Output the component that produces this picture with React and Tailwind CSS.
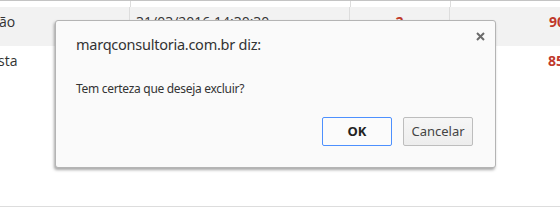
import React from "react";

const cell = "border-r border-[#dddddd] shrink-0";

export default function App() {
  return (
    <div className="relative w-[560px] h-[222px] overflow-hidden bg-white font-['Open_Sans',sans-serif] text-[14px] text-[#333]">
      {/* tabela de fundo */}
      <div className="h-px bg-[#c4c4c4]" />
      <div className="flex h-[6px]">
        <div className={`${cell} w-[131px]`} />
        <div className={`${cell} w-[220px]`} />
        <div className={`${cell} w-[100px]`} />
        <div className="flex-1" />
      </div>
      <div className="flex h-[39px] bg-[#f2f2f2]">
        <div className={`${cell} w-[131px] pt-[4px] -ml-px`}>ão</div>
        <div className={`${cell} w-[220px] pt-[4px] pl-[6px]`}>31/03/2016 14:30:30</div>
        <div className={`${cell} w-[100px] pt-[4px] text-center font-bold text-[#c0392b]`}>2</div>
        <div className="flex-1 pt-[4px] pl-[99px] font-bold text-[#c0392b] whitespace-nowrap">90</div>
      </div>
      <div className="flex h-[39px]">
        <div className="w-[131px] shrink-0 pt-[4px] -ml-[2px]">sta</div>
        <div className="w-[220px] shrink-0" />
        <div className="w-[100px] shrink-0" />
        <div className="flex-1 pt-[4px] pl-[99px] font-bold text-[#c0392b] whitespace-nowrap">85</div>
      </div>
      <div className="h-[121px]" />
      <div className="h-px bg-[#dddddd]" />

      {/* alerta do navegador */}
      <div className="absolute left-[55px] top-[20px] w-[441px] h-[148px] flex flex-col rounded-[3px] border border-[#b4b4b4] bg-[#fafafa] shadow-[-1px_2px_3px_rgba(0,0,0,0.35)] font-['Noto_Sans',sans-serif] pt-[13px] pl-[20px] pr-[22px]">
        <div className="flex items-start justify-between h-[20px]">
          <p className="text-[14.5px] leading-[20px] text-[#333] tracking-[-0.25px]">
            marqconsultoria.com.br diz:
          </p>
          <svg width="9" height="9" viewBox="0 0 9 9" className="mt-[-2px] mr-[-12px]">
            <path d="M1 1L8 8M8 1L1 8" stroke="#6b6b6b" strokeWidth="2" />
          </svg>
        </div>
        <p className="mt-[26px] text-[12px] leading-[17px] text-[#333] tracking-[-0.3px]">
          Tem certeza que deseja excluir?
        </p>
        <div className="mt-[20px] flex justify-end gap-[11px]">
          <button className="w-[70px] h-[29px] rounded-[2px] border border-[#4d90fe] bg-[#fbfbfb] text-[13px] font-bold text-[#222]">
            OK
          </button>
          <button className="w-[70px] h-[29px] rounded-[2px] border border-[#bdbdbd] bg-gradient-to-b from-[#f6f6f6] to-[#ededed] text-[13px] text-[#444]">
            Cancelar
          </button>
        </div>
      </div>
    </div>
  );
}
